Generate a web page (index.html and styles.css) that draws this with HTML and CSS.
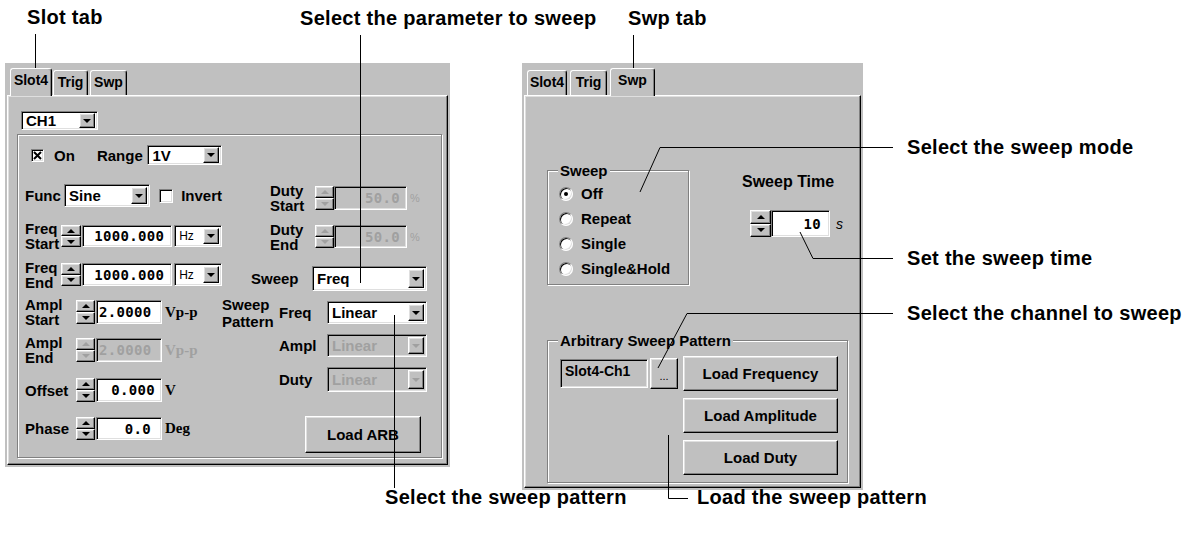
FILE: index.html
```html
<!DOCTYPE html>
<html>
<head>
<meta charset="utf-8">
<title>Sweep settings</title>
<link rel="stylesheet" href="styles.css">
</head>
<body>
<div class="figure">
  <div class="panels">
    <section class="win win-left">
      <div class="tabstrip">
        <div class="tab active tl-slot">Slot4</div>
        <div class="tab tl-trig">Trig</div>
        <div class="tab tl-swp">Swp</div>
      </div>
      <div class="tabbody">
        <div class="combo c-ch"><span class="combo-text">CH1</span><span class="combo-btn"></span></div>
        <div class="frame">
          <div class="col col-a">
            <div class="row ra1">
              <span class="check"><svg viewBox="0 0 9 9" width="9" height="9"><path d="M1 1L8 8M8 1L1 8" stroke="#000" stroke-width="2"/></svg></span>
              <span class="lbl l-on">On</span>
              <span class="lbl l-range">Range</span>
              <div class="combo c-range"><span class="combo-text">1V</span><span class="combo-btn"></span></div>
            </div>
            <div class="row ra2">
              <span class="lbl l-func">Func</span>
              <div class="combo c-func"><span class="combo-text">Sine</span><span class="combo-btn"></span></div>
              <span class="check invert"></span>
              <span class="lbl l-invert">Invert</span>
            </div>
            <div class="row ra3">
              <span class="lbl lbl2 l-freq">Freq<br>Start</span>
              <div class="spin s20"><i class="up"></i><i class="dn"></i></div>
              <div class="num n90">1000.000</div>
              <div class="combo c-hz"><span class="combo-text small">Hz</span><span class="combo-btn"></span></div>
            </div>
            <div class="row ra4">
              <span class="lbl lbl2 l-freq">Freq<br>End</span>
              <div class="spin s20"><i class="up"></i><i class="dn"></i></div>
              <div class="num n90">1000.000</div>
              <div class="combo c-hz"><span class="combo-text small">Hz</span><span class="combo-btn"></span></div>
            </div>
            <div class="row ra5">
              <span class="lbl lbl2 l-ampl">Ampl<br>Start</span>
              <div class="spin s19"><i class="up"></i><i class="dn"></i></div>
              <div class="num n66 left">2.0000</div>
              <span class="unit">Vp-p</span>
            </div>
            <div class="row ra6 disabled">
              <span class="lbl lbl2 l-ampl">Ampl<br>End</span>
              <div class="spin s19"><i class="up"></i><i class="dn"></i></div>
              <div class="num n66 left">2.0000</div>
              <span class="unit">Vp-p</span>
            </div>
            <div class="row ra7">
              <span class="lbl l-ampl">Offset</span>
              <div class="spin s19"><i class="up"></i><i class="dn"></i></div>
              <div class="num n66">0.000</div>
              <span class="unit">V</span>
            </div>
            <div class="row ra8">
              <span class="lbl l-ampl">Phase</span>
              <div class="spin s19"><i class="up"></i><i class="dn"></i></div>
              <div class="num n66 pr-phase">0.0</div>
              <span class="unit">Deg</span>
            </div>
          </div>
          <div class="col col-b">
            <div class="row rb1 disabled">
              <span class="lbl lbl2 l-duty">Duty<br>Start</span>
              <div class="spin s19"><i class="up"></i><i class="dn"></i></div>
              <div class="num n73">50.0</div>
              <span class="unit pct">%</span>
            </div>
            <div class="row rb2 disabled">
              <span class="lbl lbl2 l-duty">Duty<br>End</span>
              <div class="spin s19"><i class="up"></i><i class="dn"></i></div>
              <div class="num n73">50.0</div>
              <span class="unit pct">%</span>
            </div>
            <div class="row rb3">
              <span class="lbl l-sweep">Sweep</span>
              <div class="combo c-sweep"><span class="combo-text">Freq</span><span class="combo-btn"></span></div>
            </div>
            <div class="row rb4">
              <span class="lbl lbl2 l-pat">Sweep<br>Pattern</span>
              <span class="lbl l-sub">Freq</span>
              <div class="combo c-pat"><span class="combo-text">Linear</span><span class="combo-btn"></span></div>
            </div>
            <div class="row rb5 disabled">
              <span class="lbl l-sub">Ampl</span>
              <div class="combo c-pat"><span class="combo-text">Linear</span><span class="combo-btn"></span></div>
            </div>
            <div class="row rb6 disabled">
              <span class="lbl l-sub">Duty</span>
              <div class="combo c-pat"><span class="combo-text">Linear</span><span class="combo-btn"></span></div>
            </div>
            <div class="row rb7">
              <div class="btn btn-arb">Load ARB</div>
            </div>
          </div>
        </div>
      </div>
    </section>

    <section class="win win-right">
      <div class="tabstrip tr">
        <div class="tab tr-slot">Slot4</div>
        <div class="tab tr-trig">Trig</div>
        <div class="tab active tr-swp">Swp</div>
      </div>
      <div class="tabbody">
        <div class="top">
          <div class="group grp-sweep">
            <div class="legend">Sweep</div>
            <div class="radios">
              <div class="radio-row"><span class="radio sel"></span><span class="lbl">Off</span></div>
              <div class="radio-row"><span class="radio"></span><span class="lbl">Repeat</span></div>
              <div class="radio-row"><span class="radio"></span><span class="lbl">Single</span></div>
              <div class="radio-row"><span class="radio"></span><span class="lbl">Single&amp;Hold</span></div>
            </div>
          </div>
          <div class="time">
            <div class="time-label">Sweep Time</div>
            <div class="row time-row">
              <div class="spin s21"><i class="up"></i><i class="dn"></i></div>
              <div class="num n59">10</div>
              <span class="sec">s</span>
            </div>
          </div>
        </div>
        <div class="group grp-arb">
          <div class="legend">Arbitrary Sweep Pattern</div>
          <div class="arb-body">
            <div class="field">Slot4-Ch1</div>
            <div class="btn dots">...</div>
            <div class="loads">
              <div class="btn load">Load Frequency</div>
              <div class="btn load">Load Amplitude</div>
              <div class="btn load">Load Duty</div>
            </div>
          </div>
        </div>
      </div>
    </section>
  </div>

  <svg class="leaders" width="1200" height="533" viewBox="0 0 1200 533">
    <g fill="none" stroke="#000" stroke-width="1">
      <path d="M35.5 34V88"/>
      <path d="M360.5 35V283"/>
      <path d="M633.5 35V78"/>
      <path d="M893 147.5H660L640 192"/>
      <path d="M893 258.5H813L800 232"/>
      <path d="M893 313.5H687L658 368"/>
      <path d="M394.5 315V488"/>
      <path d="M668.5 435V498.5H688"/>
    </g>
  </svg>
  <div class="note n-slot">Slot tab</div>
  <div class="note n-param">Select the parameter to sweep</div>
  <div class="note n-swp">Swp tab</div>
  <div class="note n-mode">Select the sweep mode</div>
  <div class="note n-time">Set the sweep time</div>
  <div class="note n-chan">Select the channel to sweep</div>
  <div class="note n-pat">Select the sweep pattern</div>
  <div class="note n-load">Load the sweep pattern</div>
</div>
</body>
</html>
```

FILE: styles.css
```css
* { box-sizing: border-box; }
body { margin: 0; background: #fff; font-family: "Liberation Sans", Arial, sans-serif; }

.figure { position: relative; width: 1200px; height: 533px; overflow: hidden; }
.panels { display: flex; align-items: flex-start; padding: 63px 0 0 5px; gap: 72px; }

.win { background: #c0c0c0; display: flex; flex-direction: column; font-weight: bold; font-size: 15px; color: #000; }
.win-left { width: 445px; height: 404px; }
.win-right { width: 341px; height: 427px; }

/* tabs */
.tabstrip { height: 32px; display: flex; align-items: flex-end; padding-left: 5px; }
.tab { height: 25px; border: 1px solid; border-bottom: none; border-color: #fff #000 #000 #fff;
  border-radius: 3px 3px 0 0; box-shadow: inset -1px 0 #808080; font-size: 14px; line-height: 22px;
  text-align: center; }
.tab.active { height: 28px; margin-bottom: -1px; background: #c0c0c0; position: relative; z-index: 1; line-height: 22px; }
.tl-slot { width: 42px; }
.tl-trig { width: 35px; margin-left: 1px; }
.tl-swp { width: 37px; margin-left: 2px; }
.tr-slot { width: 40px; }
.tr-trig { width: 37px; margin-left: 3px; }
.tr-swp { width: 45px; margin-left: 3px; line-height: 18px; }

.tabbody { flex: 1; margin: 0 2px 2px 2px; border: 1px solid; border-color: #fff #000 #000 #fff;
  box-shadow: inset -1px -1px #808080, inset 1px 1px #dfdfdf; }
.win-left .tabbody { padding: 15px 0 0 9px; }

/* bevels */
.combo, .num, .field { border: 1px solid; border-color: #808080 #fff #fff #808080;
  box-shadow: inset 1px 1px #000, inset -1px -1px #dfdfdf; }
.combo-btn, .spin i, .btn { border: 1px solid; border-color: #fff #000 #000 #fff;
  box-shadow: inset -1px -1px #808080, inset 1px 1px #dfdfdf; background: #c0c0c0; }

/* combo */
.combo { display: flex; background: #fff; padding: 2px; }
.combo-text { flex: 1; display: flex; align-items: center; padding-left: 2px; white-space: nowrap; line-height: 1; }
.combo-text.small { font-weight: normal; font-size: 12px; }
.combo-btn { width: 16px; display: flex; align-items: center; justify-content: center; }
.combo-btn::after { content: ""; border-left: 4px solid transparent; border-right: 4px solid transparent; border-top: 4px solid #000; }
.c-ch { margin-left: 4px; width: 77px; height: 19px; padding: 1px 2px; }

/* frame */
.frame { margin-top: 4px; width: 425px; height: 324px; border: 1px solid #808080;
  box-shadow: inset 1px 1px #fff, 1px 1px #fff; display: flex; }
.col-a { width: 204px; flex: none; }
.col-b { flex: 1; }

.row { display: flex; align-items: center; }
.lbl { white-space: nowrap; }
.lbl2 { line-height: 15px; }

/* checkbox */
.check { width: 13px; height: 13px; flex: none; background: #fff; border: 1px solid; border-color: #808080 #fff #fff #808080;
  box-shadow: inset 1px 1px #000, inset -1px -1px #dfdfdf; display: flex; align-items: center; justify-content: center; }

/* spinner */
.spin { display: flex; flex-direction: column; height: 100%; flex: none; }
.spin i { flex: 1; display: flex; align-items: center; justify-content: center; }
.spin .up::after { content: ""; border-left: 4px solid transparent; border-right: 4px solid transparent; border-bottom: 4px solid #000; }
.spin .dn::after { content: ""; border-left: 4px solid transparent; border-right: 4px solid transparent; border-top: 4px solid #000; }
.s19 { width: 19px; } .s20 { width: 20px; } .s21 { width: 21px; }

/* numbers */
.num { height: 100%; background: #fff; font-family: "DejaVu Sans Mono", monospace; font-weight: bold; font-size: 14px;
  display: flex; align-items: center; justify-content: flex-end; padding-right: 6px; letter-spacing: 0.3px; flex: none; }
.num.left { justify-content: flex-start; padding-left: 2px; }
.n90 { width: 90px; margin-left: 1px; padding-right: 7px; }
.n66 { width: 66px; margin-left: 1px; }
.n73 { width: 73px; }
.n59 { width: 59px; padding-right: 8px; }
.pr-phase { padding-right: 10px; }
.unit { margin-left: 3px; font-family: "Liberation Serif", serif; font-weight: bold; font-size: 15px; }
.unit.pct { font-family: "Liberation Sans", sans-serif; font-weight: normal; font-size: 11px; }

/* disabled */
.disabled .num, .disabled .combo { background: #c0c0c0; color: #a0a0a0; }
.disabled .unit { color: #a0a0a0; }
.disabled .spin .up::after { border-bottom-color: #a0a0a0; }
.disabled .spin .dn::after, .disabled .combo-btn::after { border-top-color: #a0a0a0; }

/* left column rows */
.ra1 { margin-top: 10px; height: 20px; padding-left: 13px; }
.l-on { margin-left: 10px; width: 45px; }
.l-range { width: 53px; }
.c-range { width: 78px; height: 20px; padding: 1px 2px; }
.ra2 { margin-top: 19px; height: 23px; padding-left: 7px; }
.l-func { width: 43px; }
.c-func { width: 94px; height: 23px; }
.check.invert { margin-left: 9px; width: 14px; height: 14px; }
.l-invert { margin-left: 8px; }
.ra3 { margin-top: 18px; height: 22px; padding-left: 7px; }
.l-freq { width: 38px; }
.c-hz { width: 50px; height: 100%; margin-left: 2px; }
.ra4 { margin-top: 16px; height: 23px; padding-left: 7px; }
.ra5 { margin-top: 14px; height: 24px; padding-left: 7px; }
.l-ampl { width: 51px; }
.ra6 { margin-top: 14px; height: 24px; padding-left: 7px; }
.ra7 { margin-top: 16px; height: 24px; padding-left: 7px; }
.ra8 { margin-top: 15px; height: 23px; padding-left: 7px; }

/* right column rows */
.rb1 { margin-top: 51px; height: 24px; padding-left: 48px; }
.l-duty { width: 45px; }
.rb2 { margin-top: 15px; height: 23px; padding-left: 48px; }
.rb3 { margin-top: 18px; height: 25px; padding-left: 29px; }
.l-sweep { width: 61px; }
.c-sweep { width: 115px; height: 100%; }
.rb4 { margin-top: 10px; height: 23px; }
.l-pat { width: 57px; line-height: 17px; }
.l-sub { width: 48px; }
.c-pat { width: 100px; height: 100%; }
.rb5 { margin-top: 10px; height: 23px; padding-left: 57px; }
.rb6 { margin-top: 10px; height: 25px; padding-left: 57px; }
.rb7 { margin-top: 24px; height: 37px; padding-left: 83px; }
.btn { display: flex; align-items: center; justify-content: center; }
.btn-arb { width: 116px; height: 37px; }

/* groups */
.group { border: 1px solid #808080; box-shadow: inset 1px 1px #fff, 1px 1px #fff; }
.legend { margin: -9px 0 0 10px; padding: 0 2px; background: #c0c0c0; width: max-content; height: 18px; line-height: 18px; }

/* right panel */
.top { display: flex; margin: 74px 0 0 22px; align-items: flex-start; }
.grp-sweep { width: 142px; height: 115px; flex: none; }
.radios { margin-top: 1px; }
.radio-row { height: 25px; display: flex; align-items: center; padding-left: 11px; }
.radio { width: 14px; height: 14px; border-radius: 50%; background: #fff; margin-right: 8px;
  border: 1px solid; border-color: #808080 #fff #fff #808080; box-shadow: inset 1px 1px #000, inset -1px -1px #dfdfdf;
  display: flex; align-items: center; justify-content: center; }
.radio.sel::after { content: ""; width: 4px; height: 4px; border-radius: 50%; background: #000; }
.time { margin: 3px 0 0 53px; }
.time-label { line-height: 18px; font-size: 16px; }
.time-row { margin: 19px 0 0 8px; height: 27px; }
.sec { margin-left: 6px; font-style: italic; font-size: 14px; font-weight: normal; }

.grp-arb { margin: 55px 0 0 22px; width: 301px; height: 143px; }
.arb-body { display: flex; align-items: flex-start; margin-top: 6px; padding-left: 12px; }
.field { margin-top: 3px; width: 88px; height: 29px; background: #c0c0c0; padding: 3px 0 0 4px; font-size: 14px; }
.dots { margin: 2px 0 0 2px; width: 28px; height: 31px; font-weight: normal; font-size: 11px; padding-top: 4px; }
.loads { margin-left: 5px; display: flex; flex-direction: column; gap: 7px; }
.load { width: 155px; height: 35px; font-size: 15px; }

/* annotations */
.leaders { position: absolute; left: 0; top: 0; pointer-events: none; }
.note { position: absolute; font-weight: bold; font-size: 20px; line-height: 20px; letter-spacing: 0.3px; white-space: nowrap; color: #000; }
.n-slot { left: 27px; top: 7px; }
.n-param { left: 300px; top: 8px; }
.n-swp { left: 628px; top: 8px; }
.n-mode { left: 907px; top: 137px; }
.n-time { left: 907px; top: 248px; }
.n-chan { left: 907px; top: 303px; }
.n-pat { left: 385px; top: 487px; }
.n-load { left: 697px; top: 487px; }
```
